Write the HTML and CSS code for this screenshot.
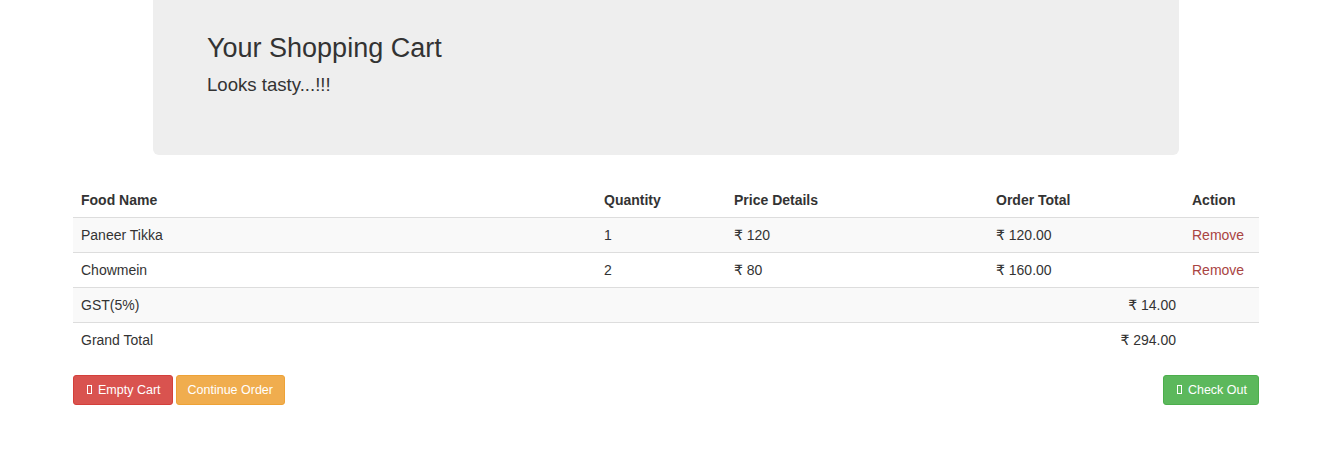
FILE: index.html
```html
<!DOCTYPE html>
<html lang="en">
<head>
<meta charset="utf-8">
<title>Your Shopping Cart</title>
<link rel="stylesheet" href="styles.css">
</head>
<body>
<div class="page">
  <div class="jumbotron">
    <h1 class="jumbo-title">Your Shopping Cart</h1>
    <p class="jumbo-sub">Looks tasty...!!!</p>
  </div>

  <table class="cart">
    <colgroup>
      <col class="c-name">
      <col class="c-qty">
      <col class="c-price">
      <col class="c-total">
      <col class="c-action">
    </colgroup>
    <thead>
      <tr>
        <th>Food Name</th>
        <th>Quantity</th>
        <th>Price Details</th>
        <th>Order Total</th>
        <th>Action</th>
      </tr>
    </thead>
    <tbody>
      <tr class="odd">
        <td>Paneer Tikka</td>
        <td>1</td>
        <td>₹ 120</td>
        <td>₹ 120.00</td>
        <td><a class="remove" href="#">Remove</a></td>
      </tr>
      <tr>
        <td>Chowmein</td>
        <td>2</td>
        <td>₹ 80</td>
        <td>₹ 160.00</td>
        <td><a class="remove" href="#">Remove</a></td>
      </tr>
      <tr class="odd">
        <td colspan="3">GST(5%)</td>
        <td class="right">₹ 14.00</td>
        <td></td>
      </tr>
      <tr>
        <td colspan="3">Grand Total</td>
        <td class="right">₹ 294.00</td>
        <td></td>
      </tr>
    </tbody>
  </table>

  <div class="actions">
    <div class="actions-left">
      <a class="btn btn-danger" href="#"><span class="icon-box"></span>Empty Cart</a>
      <a class="btn btn-warning" href="#">Continue Order</a>
    </div>
    <a class="btn btn-success" href="#"><span class="icon-box"></span>Check Out</a>
  </div>
</div>
</body>
</html>
```

FILE: styles.css
```css
html, body {
  margin: 0;
  padding: 0;
  background: #fff;
}

body {
  font-family: "Liberation Sans", Arial, "DejaVu Sans", sans-serif;
  font-size: 14px;
  line-height: 18px;
  color: #333;
}

.page {
  width: 1186px;
  margin-left: 73px;
}

.jumbotron {
  margin: 0 80px;
  padding: 34px 54px 57px;
  background: #eee;
  border-radius: 0 0 6px 6px;
}

.jumbo-title {
  margin: 0 0 8px;
  font-size: 27px;
  font-weight: 500;
  line-height: 29.7px;
}

.jumbo-sub {
  margin: 0;
  font-size: 18.6px;
  line-height: 26.6px;
}

.cart {
  width: 100%;
  margin-top: 28px;
  margin-bottom: 18px;
  border-collapse: collapse;
  table-layout: fixed;
}

.c-name { width: 523px; }
.c-qty { width: 130px; }
.c-price { width: 262px; }
.c-total { width: 196px; }
.c-action { width: 75px; }

.cart th,
.cart td {
  padding: 8px;
  line-height: 18px;
  text-align: left;
  vertical-align: top;
  white-space: nowrap;
}

.cart th {
  font-weight: bold;
  border-bottom: 1px solid #ddd;
}

.cart td {
  border-top: 1px solid #ddd;
}

.cart tr.odd td {
  background: #f9f9f9;
}

.cart td.right {
  text-align: right;
}

.remove {
  color: #a94442;
  text-decoration: none;
}

.actions {
  display: flex;
  justify-content: space-between;
  align-items: flex-start;
}

.actions-left {
  display: flex;
  gap: 3px;
}

.btn {
  display: inline-flex;
  align-items: center;
  padding: 5px 11px;
  font-size: 12.5px;
  line-height: 18px;
  color: #fff;
  text-decoration: none;
  border: 1px solid transparent;
  border-radius: 3px;
}

.btn-danger {
  background: #d9534f;
  border-color: #d43f3a;
}

.btn-warning {
  background: #f0ad4e;
  border-color: #eea236;
}

.btn-success {
  background: #5cb85c;
  border-color: #4cae4c;
}

.icon-box {
  display: inline-block;
  width: 5px;
  height: 9px;
  box-sizing: border-box;
  border: 1px solid #fff;
  margin: 0 6px 1px 2px;
}
```
